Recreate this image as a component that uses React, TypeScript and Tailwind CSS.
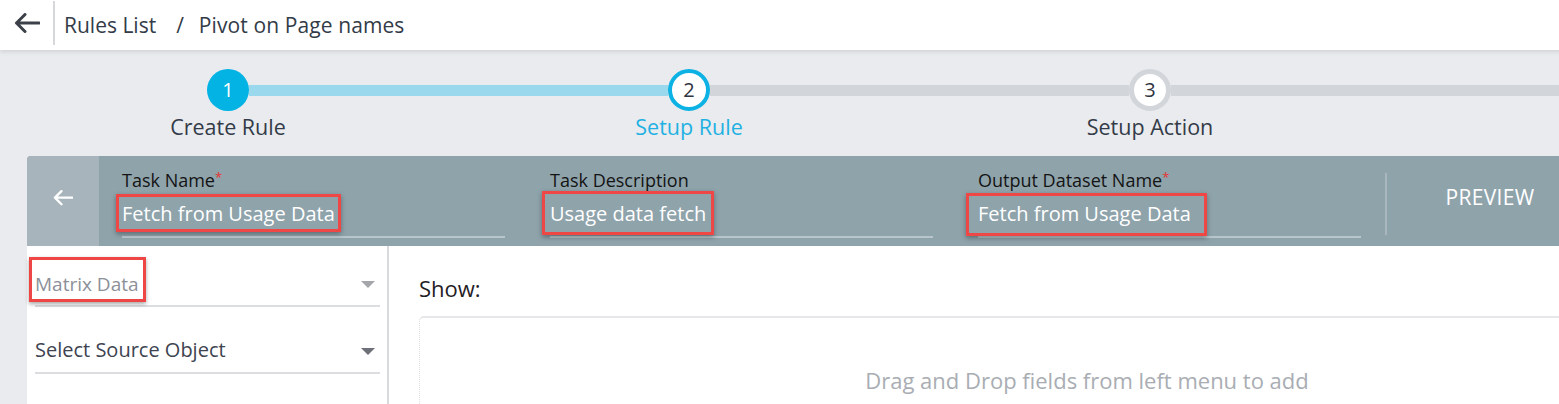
import React from 'react';

const font = { fontFamily: '"Open Sans", "Liberation Sans", sans-serif' };

const BackArrow: React.FC<{ stroke?: string; w?: number }> = ({ stroke = '#3b4049', w = 26 }) => (
  <svg width={w} height={(w * 20) / 26} viewBox="0 0 26 20" fill="none">
    <path d="M25 10H2.5M11 1.5L2.5 10L11 18.5" stroke={stroke} strokeWidth="3" strokeLinecap="round" strokeLinejoin="round" />
  </svg>
);

const Caret: React.FC<{ color: string }> = ({ color }) => (
  <svg width="14" height="7" viewBox="0 0 14 7">
    <polygon points="0,0 14,0 7,7" fill={color} />
  </svg>
);

type Step = { n: number; label: string; state: 'done' | 'active' | 'todo'; left: string; right: string; w: string };

const steps: Step[] = [
  { n: 1, label: 'Create Rule', state: 'done', left: 'bg-transparent', right: 'bg-[#9ad8ed]', w: 'w-[456px]' },
  { n: 2, label: 'Setup Rule', state: 'active', left: 'bg-[#9ad8ed]', right: 'bg-[#d2d5d9]', w: 'w-[466px]' },
  { n: 3, label: 'Setup Action', state: 'todo', left: 'bg-[#d2d5d9]', right: 'bg-[#d2d5d9]', w: 'w-[456px]' },
];

export default function App() {
  return (
    <div className="w-[1559px] h-[404px] overflow-hidden bg-[#eaebef]" style={font}>
      <div className="w-[1800px]">
        {/* top bar */}
        <div className="h-[50px] bg-white flex items-center shadow-[0_2px_4px_rgba(0,0,0,0.10)] relative z-10">
          <div className="w-[55px] h-[44px] self-start mt-[1px] border-r-2 border-[#d5d7da] flex items-center justify-center pl-[1px]">
            <BackArrow />
          </div>
          <div className="flex items-center text-[21px] text-[#333b48] ml-[9px] leading-[24px]">
            <span>Rules List</span>
            <span className="ml-[20px]">/</span>
            <span className="ml-[15px] tracking-[0.1px]">Pivot on Page names</span>
          </div>
        </div>

        {/* stepper */}
        <div className="flex pt-[19px]">
          {steps.map((s) => (
            <div key={s.n} className={`${s.w} flex flex-col items-center shrink-0`}>
              <div className="flex items-center w-full">
                <div className={`flex-1 h-[11px] ${s.left}`}></div>
                {s.state === 'done' && (
                  <div className="w-[42px] h-[42px] rounded-full bg-[#02b3e4] text-white flex items-center justify-center text-[20px]">{s.n}</div>
                )}
                {s.state === 'active' && (
                  <div className="w-[42px] h-[42px] rounded-full bg-white border-[4px] border-[#0cb2e3] text-[#2e3340] flex items-center justify-center text-[20px]">{s.n}</div>
                )}
                {s.state === 'todo' && (
                  <div className="w-[42px] h-[42px] rounded-full bg-white border-[5px] border-[#d2d5d9] text-[#2e3340] flex items-center justify-center text-[20px]">{s.n}</div>
                )}
                <div className={`flex-1 h-[11px] ${s.right}`}></div>
              </div>
              <div className={`mt-[4px] text-[21.5px] leading-[24px] ${s.state === 'active' ? 'text-[#1fb1e2]' : 'text-[#333b48]'}`}>{s.label}</div>
            </div>
          ))}
          <div className="flex-1 h-[42px] flex items-center">
            <div className="w-full h-[11px] bg-[#d2d5d9]"></div>
          </div>
        </div>

        {/* card */}
        <div className="mx-[27px] mt-[17px]">
          {/* header */}
          <div className="h-[90px] flex bg-[#8fa3ab] rounded-t-[4px]">
            <div className="w-[72px] bg-[#a7b4bb] rounded-tl-[4px] flex items-center justify-center pb-[6px]">
              <BackArrow stroke="#ffffff" w={20} />
            </div>
            <div className="flex pl-[23px] gap-[45px] pt-[14px]">
              <Field label="Task Name" required value="Fetch from Usage Data" box="-mt-[8px] -mb-[6px] -ml-[6px] pt-[5px] pb-[3px] pl-[3px] pr-[3px]" />
              <Field label="Task Description" value="Usage data fetch" box="-mt-[11px] -mb-[9px] -ml-[8px] pt-[8px] pb-[6px] pl-[5px] pr-[5px]" />
              <Field label="Output Dataset Name" required value="Fetch from Usage Data" box="-mt-[9px] -mb-[10px] -ml-[12px] pt-[6px] pb-[7px] pl-[9px] pr-[13px]" />
            </div>
            <div className="ml-[24px] mt-[17px] w-[2px] h-[62px] bg-[#a9b8be]"></div>
            <div className="w-[206px] flex items-center justify-center text-white text-[21px] tracking-[0.3px] pb-[6px]">PREVIEW</div>
          </div>

          {/* body */}
          <div className="bg-white h-[160px] flex">
            <div className="w-[362px] pl-[8px] pr-[7px] border-r-2 border-[#d8dadd] shrink-0">
              <div className="pt-[26px] flex items-start justify-between h-[50px]">
                <span className="inline-block -mt-[15px] -ml-[6px] pt-[12px] pb-[3px] pl-[3px] pr-[4px] border-[3px] border-[#ee4545] shadow-[0_2px_4px_rgba(0,0,0,0.35)] text-[19px] leading-[24px] text-[#8c9099]">Matrix Data</span>
                <span className="mt-[9px] mr-[5px]"><Caret color="#a4a6aa" /></span>
              </div>
              <div className="h-[2px] bg-[#dcdde0] mt-[9px]"></div>
              <div className="mt-[31px] flex items-center justify-between h-[24px]">
                <span className="text-[20px] leading-[24px] text-[#3d4350]">Select Source Object</span>
                <span className="mr-[5px] mt-[2px]"><Caret color="#6d7079" /></span>
              </div>
              <div className="h-[2px] bg-[#dcdde0] mt-[10px]"></div>
            </div>
            <div className="flex-1 pl-[30px] pr-[19px]">
              <div className="pt-[30px] text-[22px] leading-[24px] text-[#1f2024]">Show:</div>
              <div className="mt-[16px] h-[100px] border-t-2 border-l border-t-[#e6e7e9] border-l-[#dddfe2] border-dotted [border-top-style:solid] rounded-tl-[5px] pt-[50px] text-center text-[22px] leading-[24px] text-[#a9adb3]">
                Drag and Drop fields from left menu to add
              </div>
            </div>
          </div>
        </div>
      </div>
    </div>
  );
}

const Field: React.FC<{ label: string; value: string; required?: boolean; box: string }> = ({ label, value, required, box }) => (
  <div className="w-[383px]">
    <div className="text-[18px] leading-[20px] text-[#141414]">
      {label}
      {required && <span className="text-[#e5322f] text-[13px] align-top leading-[14px]">*</span>}
    </div>
    <div className="flex items-start h-[24px] mt-[12px]">
      <span className={`inline-block border-[3px] border-[#ef4646] shadow-[0_2px_5px_rgba(0,0,0,0.35)] text-[20px] leading-[24px] text-white ${box}`}>{value}</span>
    </div>
    <div className="h-[2px] bg-[#b8c6cc] mt-[10px]"></div>
  </div>
);
